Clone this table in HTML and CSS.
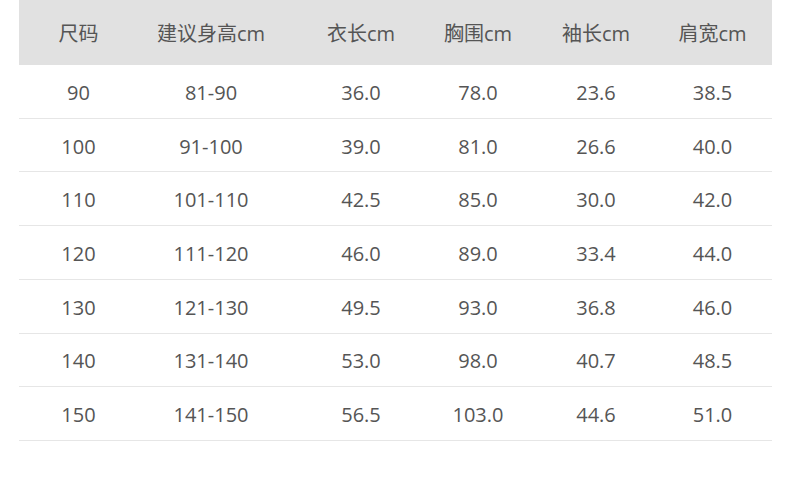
FILE: index.html
```html
<!DOCTYPE html>
<html lang="zh">
<head>
<meta charset="utf-8">
<link rel="stylesheet" href="styles.css">
</head>
<body>
<div class="table">
  <div class="row head">
    <div>尺码</div><div>建议身高cm</div><div>衣长cm</div><div>胸围cm</div><div>袖长cm</div><div>肩宽cm</div>
  </div>
  <div class="row"><div>90</div><div>81-90</div><div>36.0</div><div>78.0</div><div>23.6</div><div>38.5</div></div>
  <div class="row"><div>100</div><div>91-100</div><div>39.0</div><div>81.0</div><div>26.6</div><div>40.0</div></div>
  <div class="row"><div>110</div><div>101-110</div><div>42.5</div><div>85.0</div><div>30.0</div><div>42.0</div></div>
  <div class="row"><div>120</div><div>111-120</div><div>46.0</div><div>89.0</div><div>33.4</div><div>44.0</div></div>
  <div class="row"><div>130</div><div>121-130</div><div>49.5</div><div>93.0</div><div>36.8</div><div>46.0</div></div>
  <div class="row"><div>140</div><div>131-140</div><div>53.0</div><div>98.0</div><div>40.7</div><div>48.5</div></div>
  <div class="row"><div>150</div><div>141-150</div><div>56.5</div><div>103.0</div><div>44.6</div><div>51.0</div></div>
</div>
</body>
</html>
```
FILE: styles.css
```css
html, body {
  margin: 0;
  padding: 0;
  background: #ffffff;
}
body {
  width: 790px;
  height: 485px;
  overflow: hidden;
  font-family: "Open Sans", "Noto Sans CJK SC", sans-serif;
  font-size: 20px;
  color: #555555;
}
.table {
  margin-left: 19px;
  width: 753px;
}
.row {
  display: grid;
  grid-template-columns: 119px 146px 154px 80px 156px 77px 1fr;
  align-items: center;
  height: 53.71px;
  box-sizing: border-box;
  border-bottom: 1px solid #e6e6e6;
}
.row > div {
  text-align: center;
  white-space: nowrap;
  line-height: 1;
  padding-top: 3px;
}
.row.head {
  height: 65px;
  background: #e1e1e1;
  border-bottom: none;
}
.row.head > div {
  padding-top: 2px;
}
```
